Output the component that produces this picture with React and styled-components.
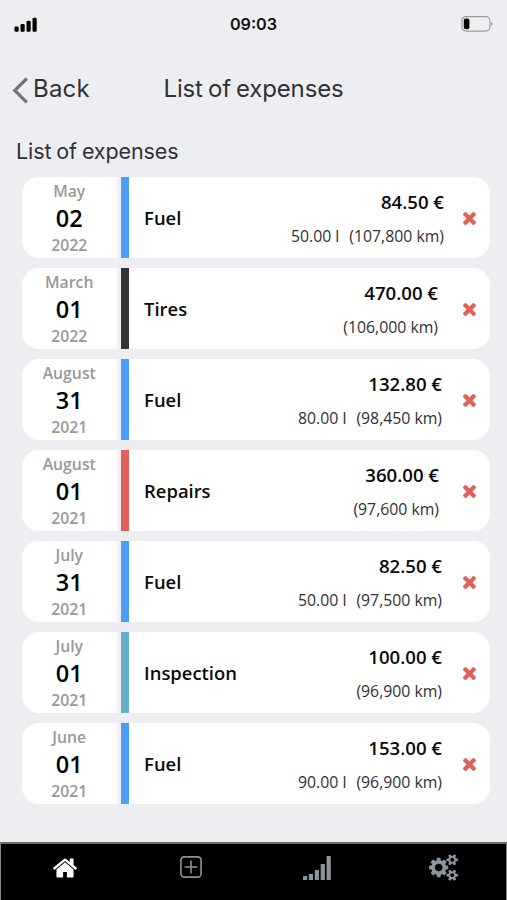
import React from 'react';
import styled, {createGlobalStyle} from 'styled-components';


const expenses = [
    {month: 'May', day: '02', year: '2022', type: 'Fuel', price: '84.50 €', liters: '50.00 l', km: '107,800', inset: 46},
    {month: 'March', day: '01', year: '2022', type: 'Tires', price: '470.00 €', km: '106,000', inset: 52},
    {month: 'August', day: '31', year: '2021', type: 'Fuel', price: '132.80 €', liters: '80.00 l', km: '98,450', inset: 48},
    {month: 'August', day: '01', year: '2021', type: 'Repairs', price: '360.00 €', km: '97,600', inset: 51},
    {month: 'July', day: '31', year: '2021', type: 'Fuel', price: '82.50 €', liters: '50.00 l', km: '97,500', inset: 48},
    {month: 'July', day: '01', year: '2021', type: 'Inspection', price: '100.00 €', km: '96,900', inset: 48},
    {month: 'June', day: '01', year: '2021', type: 'Fuel', price: '153.00 €', liters: '90.00 l', km: '96,900', inset: 48},
];

const typeColors = {
    Fuel: '#4a9df8',
    Tires: '#343538',
    Repairs: '#e4605e',
    Inspection: '#62b1cb',
};

const SignalIcon = () => (
    <svg width="23" height="15" viewBox="0 0 23 15">
        <rect x="0.5" y="9.5" width="4.2" height="5.3" rx="1.2"/>
        <rect x="6.5" y="7" width="4.2" height="7.8" rx="1.2"/>
        <rect x="12.5" y="3.7" width="4.2" height="11.1" rx="1.2"/>
        <rect x="18.5" y="0.7" width="4.2" height="14.1" rx="1.2"/>
    </svg>
);

const BatteryIcon = () => (
    <svg width="32" height="16" viewBox="0 0 32 16">
        <rect x="0.9" y="0.7" width="28" height="14.4" rx="4" fill="none" stroke="#9b9c9f" strokeWidth="1.2"/>
        <rect x="2.8" y="2.6" width="5.6" height="10.6" rx="2"/>
        <path d="M30.2 5.6 Q32.6 7.9 30.2 10.2 Z" fill="#8d8e91"/>
    </svg>
);

const BackIcon = () => (
    <svg width="16" height="27" viewBox="0 0 16 27">
        <path d="M14.8 1.5 L2.8 13.4 L14.8 25.3" fill="none" stroke="#737477" strokeWidth="3.2"/>
    </svg>
);

const CrossIcon = () => (
    <svg width="13" height="13" viewBox="302 366 1188 1188" fill="#e0605a">
        <path d="M1490 1322q0 40-28 68l-136 136q-28 28-68 28t-68-28l-294-294-294 294q-28 28-68 28t-68-28l-136-136q-28-28-28-68t28-68l294-294-294-294q-28-28-28-68t28-68l136-136q28-28 68-28t68 28l294 294 294-294q28-28 68-28t68 28l136 136q28 28 28 68t-28 68l-294 294 294 294q28 28 28 68z"/>
    </svg>
);

const HomeIcon = () => (
    <svg width="24" height="20" viewBox="24 236 1616 1310" fill="currentColor">
        <path d="M1408 992v480q0 26-19 45t-45 19h-384v-384h-256v384h-384q-26 0-45-19t-19-45v-480q0-1 .5-3t.5-3l575-474 575 474q1 2 1 6zm223-69l-62 74q-8 9-21 11h-3q-13 0-21-7l-692-577-692 577q-12 8-24 7-13-2-21-11l-62-74q-8-10-7-23.5t11-21.5l719-599q32-26 76-26t76 26l244 204v-195q0-14 9-23t23-9h192q14 0 23 9t9 23v408l219 182q10 8 11 21.5t-7 23.5z"/>
    </svg>
);

const PlusIcon = () => (
    <svg width="22" height="22" viewBox="0 0 22 22" fill="none" stroke="currentColor" strokeWidth="1.6">
        <rect x="0.9" y="0.9" width="20.2" height="20.2" rx="3.4"/>
        <path d="M11 4.6 V17.4 M4.6 11 H17.4"/>
    </svg>
);

const StatsIcon = () => (
    <svg width="28" height="24" viewBox="0 0 28 24" fill="currentColor">
        <rect x="0" y="20" width="4.2" height="4" rx="0.6"/>
        <rect x="5.9" y="18" width="4.2" height="6" rx="0.6"/>
        <rect x="11.8" y="14" width="4.2" height="10" rx="0.6"/>
        <rect x="17.7" y="8" width="4.2" height="16" rx="0.6"/>
        <rect x="23.6" y="0" width="4.2" height="24" rx="0.6"/>
    </svg>
);

const CogsIcon = () => (
    <svg width="29" height="27" viewBox="0 0 1920 1792" fill="currentColor">
        <path d="M896 896q0-106-75-181t-181-75-181 75-75 181 75 181 181 75 181-75 75-181zm768 512q0-52-38-90t-90-38-90 38-38 90q0 53 37.5 90.5t90.5 37.5 90.5-37.5 37.5-90.5zm0-1024q0-52-38-90t-90-38-90 38-38 90q0 53 37.5 90.5t90.5 37.5 90.5-37.5 37.5-90.5zm-384 421v185q0 10-7 19.5t-16 10.5l-155 24q-11 35-32 76 34 48 90 115 7 11 7 20 0 12-7 19-23 30-82.5 89.5t-78.5 59.5q-11 0-21-7l-115-90q-37 19-77 31-11 108-23 155-7 24-30 24h-186q-11 0-20-7.5t-10-17.5l-23-153q-34-10-75-31l-118 89q-7 7-20 7-11 0-21-8-144-133-144-160 0-9 7-19 10-14 41-53t47-61q-23-44-35-82l-152-24q-10-1-17-9.5t-7-19.5v-185q0-10 7-19.5t16-10.5l155-24q11-35 32-76-34-48-90-115-7-11-7-20 0-12 7-20 22-30 82-89t79-59q11 0 21 7l115 90q34-18 77-32 11-108 23-154 7-24 30-24h186q11 0 20 7.5t10 17.5l23 153q34 10 75 31l118-89q8-7 20-7 11 0 21 8 144 133 144 160 0 8-7 19-12 16-42 54t-45 60q23 48 34 82l152 23q10 2 17 10.5t7 19.5zm640 533v140q0 16-149 31-12 27-30 52 51 113 51 138 0 4-4 7-122 71-124 71-8 0-46-47t-52-68q-20 2-30 2t-30-2q-14 21-52 68t-46 47q-2 0-124-71-4-3-4-7 0-25 51-138-18-25-30-52-149-15-149-31v-140q0-16 149-31 13-29 30-52-51-113-51-138 0-4 4-7 4-2 35-20t59-34 30-16q8 0 46 46.5t52 67.5q20-2 30-2t30 2q51-71 92-112l6-2q4 0 124 70 4 3 4 7 0 25-51 138 17 23 30 52 149 15 149 31zm0-1024v140q0 16-149 31-12 27-30 52 51 113 51 138 0 4-4 7-122 71-124 71-8 0-46-47t-52-68q-20 2-30 2t-30-2q-14 21-52 68t-46 47q-2 0-124-71-4-3-4-7 0-25 51-138-18-25-30-52-149-15-149-31v-140q0-16 149-31 13-29 30-52-51-113-51-138 0-4 4-7 4-2 35-20t59-34 30-16q8 0 46 46.5t52 67.5q20-2 30-2t30 2q51-71 92-112l6-2q4 0 124 70 4 3 4 7 0 25-51 138 17 23 30 52 149 15 149 31z"/>
    </svg>
);

const Expense = ({month, day, year, type, price, liters, km, inset}) => (
    <Card>
        <DateCell>
            <Muted>{month}</Muted>
            <Day>{day}</Day>
            <Muted>{year}</Muted>
        </DateCell>
        <Stripe color={typeColors[type]}/>
        <Type>{type}</Type>
        <Values>
            <Price>{price}</Price>
            <Details>
                {liters && <span>{liters}</span>}
                <span>({km} km)</span>
            </Details>
        </Values>
        <Remove $inset={inset} aria-label="Remove"><CrossIcon/></Remove>
    </Card>
);

export default class App extends React.Component {

    render() {
        return (
            <Screen>
                <GlobalStyle/>
                <StatusBar>
                    <SignalIcon/>
                    <Clock>09:03</Clock>
                    <BatteryIcon/>
                </StatusBar>

                <Header>
                    <Back><BackIcon/><BackLabel>Back</BackLabel></Back>
                    <Title>List of expenses</Title>
                </Header>

                <Subtitle>List of expenses</Subtitle>

                <List>
                    {expenses.map((item, i) => <Expense key={i} {...item}/>)}
                </List>

                <TabBar>
                    <Tab color="#ffffff" $top={14}><HomeIcon/></Tab>
                    <Tab $top={12}><PlusIcon/></Tab>
                    <Tab $top={12}><StatsIcon/></Tab>
                    <Tab $top={10}><CogsIcon/></Tab>
                </TabBar>
            </Screen>
        );
    }
}


const GlobalStyle = createGlobalStyle`
    * {
        box-sizing: border-box;
    }

    body {
        margin: 0;
        background: #edeef2;
    }
`;

const Screen = styled.div`
    width: 507px;
    height: 900px;
    display: flex;
    flex-direction: column;
    background: #edeef2;
    color: #303136;
    font-family: 'Open Sans', sans-serif;
    overflow: hidden;
`;

const StatusBar = styled.div`
    height: 48px;
    flex: none;
    display: grid;
    grid-template-columns: 1fr auto 1fr;
    align-items: center;
    padding: 0 14px;

    svg:last-child {
        justify-self: end;
    }
`;

const Clock = styled.span`
    color: #111111;
    font: 600 16.2px 'Inter', sans-serif;
`;

const Header = styled.div`
    height: 84px;
    flex: none;
    display: grid;
    grid-template-columns: 1fr auto 1fr;
    align-items: center;
    padding: 0 12px;
    font: 400 24px 'Inter', sans-serif;
`;

const Back = styled.div`
    display: flex;
    align-items: center;
    gap: 5px;
`;

const BackLabel = styled.span`
    padding-bottom: 3px;
    letter-spacing: 0.2px;
`;

const Title = styled.span`
    padding-bottom: 3px;
    letter-spacing: -0.15px;
    word-spacing: -1.5px;
`;

const Subtitle = styled.h2`
    height: 45.3px;
    flex: none;
    margin: 0;
    padding-left: 16px;
    font: 400 21.5px/39px 'Inter', sans-serif;
    letter-spacing: -0.1px;
    word-spacing: -1px;
`;

const List = styled.div`
    flex: 1;
    display: flex;
    flex-direction: column;
    gap: 10.5px;
    padding: 0 17px 0 22px;
`;

const Card = styled.div`
    height: 80.5px;
    flex: none;
    display: flex;
    background: #ffffff;
    border-radius: 17px;
    overflow: hidden;
`;

const DateCell = styled.div`
    width: 98.5px;
    display: flex;
    flex-direction: column;
    align-items: center;
    justify-content: center;
    border-right: 4.5px solid #f1f1f4;
`;

const Muted = styled.span`
    color: #999999;
    font-size: 15.8px;
    font-weight: 600;
    line-height: 26px;
`;

const Day = styled.span`
    color: #000000;
    font-size: 23.5px;
    font-weight: 600;
    line-height: 28px;
`;

const Stripe = styled.div`
    width: 8.3px;
    background: ${props => props.color};
`;

const Type = styled.span`
    flex: 1;
    padding-left: 15.3px;
    color: #0a0a0a;
    font-size: 18.4px;
    font-weight: 600;
    line-height: 81.5px;
`;

const Values = styled.div`
    display: flex;
    flex-direction: column;
    align-items: flex-end;
    padding-top: 8px;
`;

const Price = styled.span`
    color: #0a0a0a;
    font-size: 18.6px;
    font-weight: 600;
    line-height: 34px;
`;

const Details = styled.span`
    display: flex;
    gap: 10px;
    font-size: 15.8px;
    line-height: 34px;
`;

const Remove = styled.div`
    width: ${props => props.$inset}px;
    display: flex;
    align-items: center;
    justify-content: flex-end;
    padding: 1px 14px 0 0;
`;

const TabBar = styled.div`
    height: 58px;
    flex: none;
    display: grid;
    grid-template-columns: repeat(4, 1fr);
    padding-left: 1px;
    border: 1px solid #88898b;
    border-top: 2px solid #6d6e6f;
    border-bottom: 0;
    background: #000000;
`;

const Tab = styled.div`
    display: flex;
    align-items: flex-start;
    justify-content: center;
    padding-top: ${props => props.$top}px;
    color: ${props => props.color || '#8d959c'};
`;
